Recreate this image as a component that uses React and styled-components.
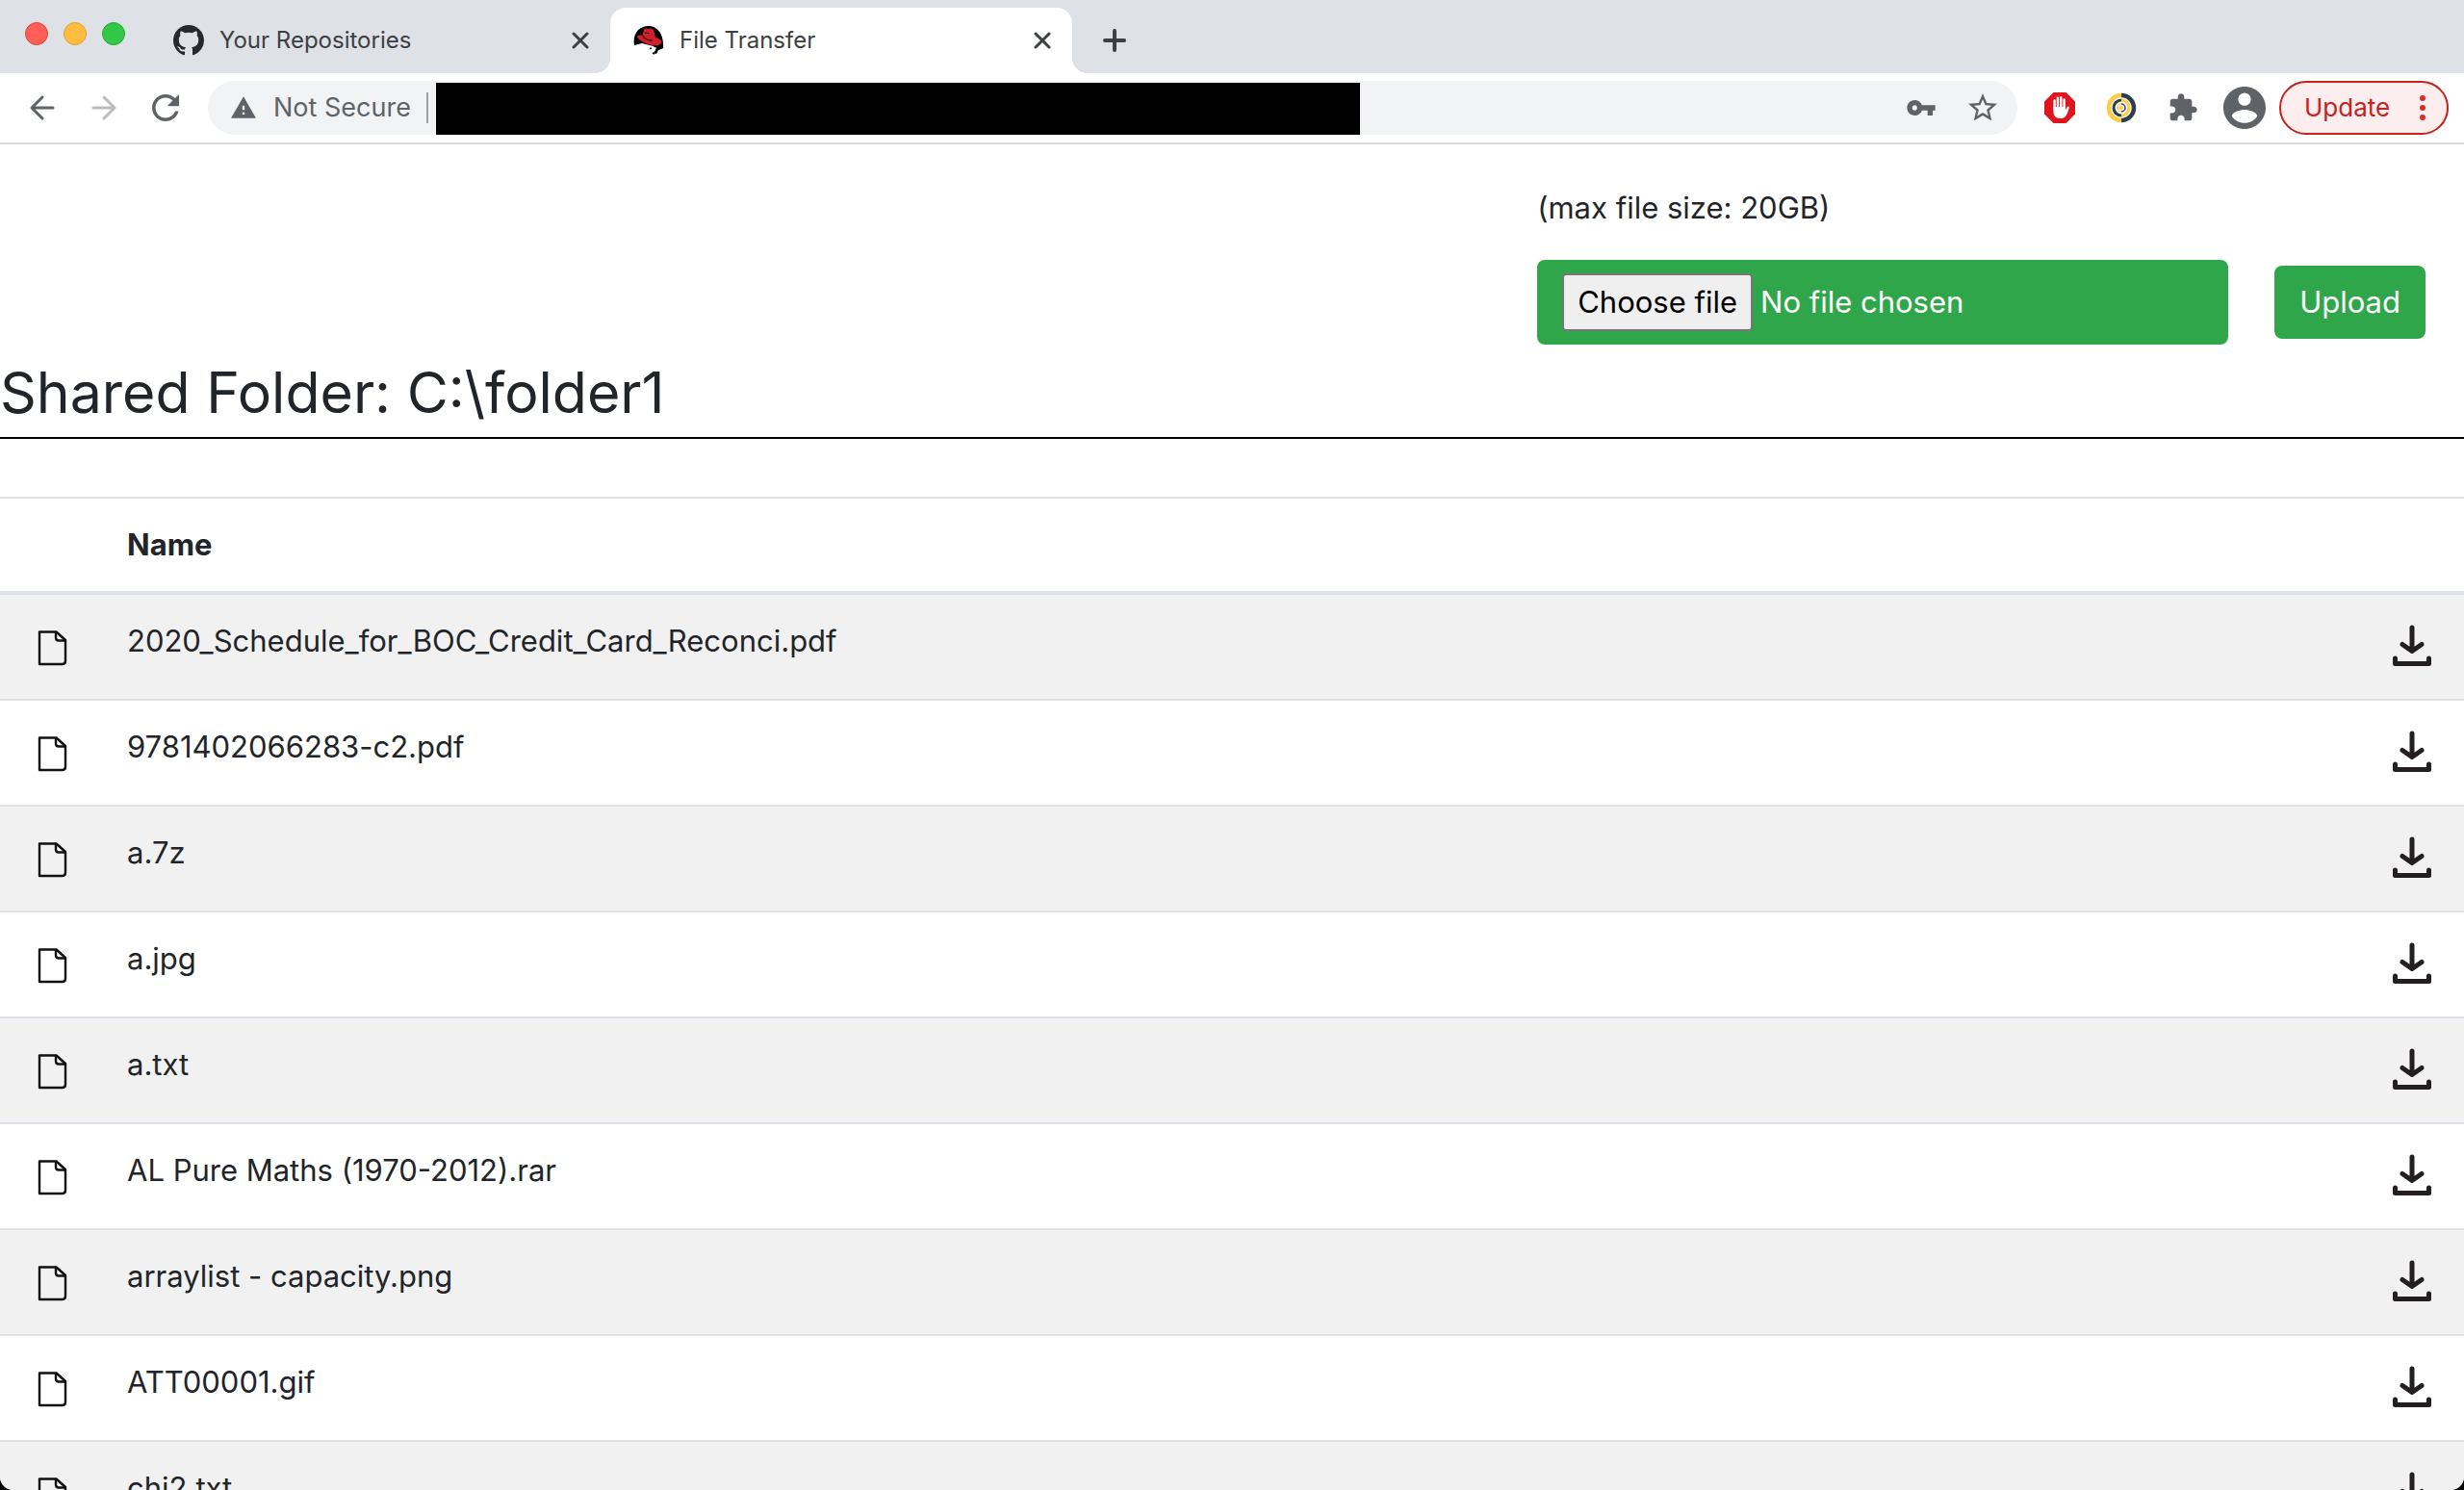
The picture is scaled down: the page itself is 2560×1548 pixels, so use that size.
import React, { useRef, useState } from "react";
import styled, { createGlobalStyle } from "styled-components";

const GlobalStyle = createGlobalStyle`
  *, *::before, *::after { box-sizing: border-box; }
  html, body { margin: 0; background: #000; }
  body, button, input {
    font-family: Inter, "Liberation Sans", sans-serif;
  }
`;

const Window = styled.div`
  display: flex;
  flex-direction: column;
  height: 100vh;
  overflow: hidden;
  background: #fff;
  border-radius: 0 0 14px 14px;
`;

const TabStrip = styled.header`
  display: flex;
  flex: none;
  height: 76px;
  padding-left: 26px;
  background: #dee1e6;
`;

const TrafficLights = styled.div`
  display: flex;
  gap: 16px;
  padding-top: 23px;
  margin-right: 24px;
`;

const Light = styled.button`
  width: 24px;
  height: 24px;
  padding: 0;
  border: 1px solid ${(p) => p.$edge};
  border-radius: 50%;
  background: ${(p) => p.$fill};
`;

const Tab = styled.div`
  position: relative;
  display: flex;
  align-items: center;
  width: 480px;
  margin-top: 8px;
  padding: 0 22px 0 ${(p) => (p.$active ? "24px" : "26px")};
  border-radius: 16px 16px 0 0;
  background: ${(p) => (p.$active ? "#fff" : "transparent")};

  &::before, &::after {
    content: "";
    display: ${(p) => (p.$active ? "block" : "none")};
    position: absolute;
    bottom: 0;
    width: 16px;
    height: 16px;
  }
  &::before {
    right: 100%;
    background: radial-gradient(circle at 0 0, transparent 16px, #fff 16px);
  }
  &::after {
    left: 100%;
    background: radial-gradient(circle at 100% 0, transparent 16px, #fff 16px);
  }
`;

const TabTitle = styled.span`
  flex: 1;
  margin: 0 16px;
  font-size: 24px;
  line-height: 32px;
  color: #3c4043;
  white-space: nowrap;
`;

const IconButton = styled.button`
  display: grid;
  place-items: center;
  flex: none;
  width: ${(p) => p.$size}px;
  height: ${(p) => p.$size}px;
  padding: 0;
  border: 0;
  background: none;
  color: ${(p) => p.$color || "#5f6368"};
`;

const NewTab = styled(IconButton)`
  align-self: center;
  margin: 8px 0 0 24px;
`;

const Toolbar = styled.nav`
  display: flex;
  flex: none;
  align-items: center;
  height: 74px;
  padding: 0 16px 0 12px;
  border-bottom: 2px solid #dadce0;
`;

const Omnibox = styled.div`
  display: flex;
  flex: 1;
  align-items: center;
  height: 56px;
  margin: 0 12px;
  padding: 0 4px 0 24px;
  border-radius: 28px;
  background: #f1f3f4;
`;

const Security = styled.span`
  display: flex;
  align-items: center;
  gap: 18px;
  height: 32px;
  padding-right: 16px;
  margin-right: 8px;
  border-right: 2px solid #9aa0a6;
  font-size: 27px;
  line-height: 32px;
  color: #5f6368;
  white-space: nowrap;
`;

const Address = styled.input`
  flex: 0 1 960px;
  min-width: 0;
  height: 54px;
  align-self: flex-end;
  margin-right: auto;
  padding: 0 12px;
  border: 0;
  background: #000;
  color: #000;
  font-size: 27px;
`;

const UpdateButton = styled.button`
  display: flex;
  flex: none;
  align-items: center;
  justify-content: space-between;
  width: 176px;
  height: 56px;
  margin-left: 4px;
  padding: 0 22px 0 24px;
  border: 2px solid #c5221f;
  border-radius: 28px;
  background: #fceeee;
  color: #c5221f;
  font-size: 26px;
  line-height: 32px;
`;

const Page = styled.main`
  flex: 1;
  min-height: 0;
  overflow: hidden;
  color: #212529;
  font-size: 31px;
  line-height: 48px;
`;

const UploadForm = styled.form`
  display: grid;
  grid-template-columns: 718px auto;
  column-gap: 48px;
  row-gap: 30px;
  align-items: center;
  justify-content: end;
  padding: 42px 40px 0 0;
`;

const Hint = styled.p`
  grid-column: 1 / -1;
  margin: 0;
`;

const FilePicker = styled.div`
  display: flex;
  align-items: center;
  gap: 8px;
  height: 88px;
  padding: 0 26px;
  border-radius: 8px;
  background: #30a64a;
  color: #fff;
`;

const ChooseButton = styled.button`
  height: 60px;
  padding: 0 14px;
  border: 2px solid #767676;
  border-radius: 4px;
  background: #efefef;
  color: #000;
  font-size: 31px;
  line-height: 48px;
  white-space: nowrap;
`;

const UploadButton = styled.button`
  height: 76px;
  padding: 0 26px;
  border: 0;
  border-radius: 8px;
  background: #30a64a;
  color: #fff;
  font-size: 31px;
  line-height: 48px;
`;

const Title = styled.h1`
  margin: 0 0 60px;
  padding: 12px 0 8px;
  border-bottom: 2px solid #000;
  font-size: 59px;
  font-weight: 400;
  line-height: 76px;
`;

const FileTable = styled.table`
  width: 100%;
  border-top: 2px solid #dee2e6;
  border-spacing: 0;
`;

const HeadCell = styled.th`
  width: ${(p) => p.$width || "auto"};
  height: 100px;
  padding: 0 24px;
  border-bottom: 4px solid #dee2e6;
  font-weight: 700;
  text-align: left;
`;

const Row = styled.tr`
  &:nth-child(odd) { background: #f1f1f1; }
`;

const Cell = styled.td`
  height: 110px;
  padding: ${(p) => (p.$icon ? "30px 0 0" : "24px 24px 0")};
  border-bottom: 2px solid #dee2e6;
  vertical-align: top;
  line-height: ${(p) => (p.$icon ? "0" : "48px")};
`;

const FileIconBox = styled.span`
  display: block;
  padding: 7px 0 0 39px;
`;

const DownloadLink = styled.a`
  display: block;
  width: 42px;
  margin-left: auto;
  margin-right: 33px;
`;

const Stroke = ({ size, box = "0 0 24 24", w = 2, children }) => (
  <svg width={size} height={size} viewBox={box} fill="none" stroke="currentColor" strokeWidth={w} strokeLinecap="round" strokeLinejoin="round" aria-hidden="true">
    {children}
  </svg>
);

const Solid = ({ size, box = "0 0 24 24", d }) => (
  <svg width={size} height={size} viewBox={box} fill="currentColor" aria-hidden="true">
    <path d={d} />
  </svg>
);

const CloseIcon = () => (
  <Stroke size={18} box="0 0 18 18" w={3}><path d="M2 2l14 14M16 2L2 16" /></Stroke>
);

const GithubIcon = () => (
  <svg width="32" height="32" viewBox="0 0 16 16" fill="#24292e" aria-hidden="true">
    <path d="M8 0C3.58 0 0 3.58 0 8c0 3.54 2.29 6.53 5.47 7.59.4.07.55-.17.55-.38 0-.19-.01-.82-.01-1.49-2.01.37-2.53-.49-2.69-.94-.09-.23-.48-.94-.82-1.13-.28-.15-.68-.52-.01-.53.63-.01 1.08.58 1.23.82.72 1.21 1.87.87 2.33.66.07-.52.28-.87.51-1.07-1.78-.2-3.64-.89-3.64-3.95 0-.87.31-1.59.82-2.15-.08-.2-.36-1.02.08-2.12 0 0 .67-.21 2.2.82.64-.18 1.32-.27 2-.27s1.36.09 2 .27c1.53-1.04 2.2-.82 2.2-.82.44 1.1.16 1.92.08 2.12.51.56.82 1.27.82 2.15 0 3.07-1.87 3.75-3.65 3.95.29.25.54.73.54 1.48 0 1.07-.01 1.93-.01 2.2 0 .21.15.46.55.38A8.013 8.013 0 0016 8c0-4.42-3.58-8-8-8z" />
  </svg>
);

const RedHatIcon = () => (
  <svg width="32" height="32" viewBox="0 0 32 32" aria-hidden="true">
    <path d="M1 21C-1 9 6 1 15.500 1S32 9 31 24l-2 1-3 1-2 4-3-1 2-3-2-4-12-3-4 1z" fill="#000" />
    <path d="M7 20l4 .5 9 2 4 1-1.500 3-2.500-1-2 1.500-4-1-3-2-4-1z" fill="#fff" />
    <path d="M17 24.500l2-.5M20 29l2 1" stroke="#000" strokeWidth="1.500" />
    <path d="M11 5c.5-2 2.500-1.500 4-.8C17 3 20 3.300 21 5.500c1 2 1.300 5 2 7.500 4 1 7 3 6 6-2 3-9 3-15 .5S3 13.500 4.500 11.500c1-1.300 3-1 5-.5z" fill="#d1202a" />
    <path d="M9.800 11.500c2.500 3.500 6.500 4.500 10 4.500M12.500 8l4 .5" fill="none" stroke="#000" strokeWidth="1.200" />
  </svg>
);

const AdBlockIcon = () => (
  <svg width="32" height="32" viewBox="0 0 32 32" aria-hidden="true">
    <path d="M9.500 0h13L32 9.500v13L22.500 32h-13L0 22.500v-13z" fill="#e1141d" />
    <g stroke="#fff" strokeWidth="2.400" strokeLinecap="round" fill="none">
      <path d="M10.600 8.500V18M13.900 5.800V17M17.300 5.200V17M20.600 7.500V18" />
    </g>
    <path d="M9.400 15h12.400v3.500l1.800-3.300c.6-1.200 2.400-.9 2.100.6-.9 4.200-2 7-3.700 9.200-1.300 1.500-3 2-5.300 2-5.400 0-7.300-3-7.300-8z" fill="#fff" />
  </svg>
);

const TargetIcon = () => (
  <svg width="32" height="32" viewBox="0 0 32 32" fill="none" aria-hidden="true">
    <g stroke="#ffcb45">
      <path d="M16 3a13 13 0 000 26" strokeWidth="4.500" />
      <path d="M16 8a8 8 0 010 16" strokeWidth="3" />
      <path d="M16 12a4 4 0 000 8" strokeWidth="1.500" />
    </g>
    <g stroke="#2f3e4e">
      <path d="M16 3a13 13 0 010 26" strokeWidth="4.500" />
      <path d="M16 8a8 8 0 000 16" strokeWidth="3" />
      <path d="M16 12a4 4 0 010 8" strokeWidth="1.500" />
    </g>
    <circle cx="16" cy="16" r="2" fill="#ffcb45" />
  </svg>
);

const DocumentIcon = () => (
  <svg width="32" height="38" viewBox="0 0 32 38" fill="none" stroke="#111" strokeWidth="2.400" strokeLinejoin="round" aria-hidden="true">
    <path d="M2 35V1.500H19.500L29 10V31.500Q29 35 25.500 35H2Z" />
    <path d="M19 1.500V7.500Q19 10.500 22 10.500H29" />
  </svg>
);

const DownloadIcon = () => (
  <svg width="42" height="44" viewBox="0 0 42 44" fill="none" stroke="#231f20" strokeWidth="5" strokeLinecap="round" strokeLinejoin="round" aria-hidden="true">
    <path d="M21 4V28M11 21.500L21 28.500L31 21.500" />
    <path d="M3.500 36V41.500H38.500V36" />
  </svg>
);

const files = [
  "2020_Schedule_for_BOC_Credit_Card_Reconci.pdf",
  "9781402066283-c2.pdf",
  "a.7z",
  "a.jpg",
  "a.txt",
  "AL Pure Maths (1970-2012).rar",
  "arraylist - capacity.png",
  "ATT00001.gif",
  "chi2.txt",
];

const PATHS = {
  reload: "M17.65 6.350C16.200 4.900 14.210 4 12 4c-4.420 0-7.990 3.580-7.990 8s3.570 8 7.990 8c3.730 0 6.840-2.550 7.730-6h-2.080c-.820 2.330-3.040 4-5.650 4-3.310 0-6-2.690-6-6s2.690-6 6-6c1.660 0 3.140.690 4.220 1.780L13 11h7V4l-2.350 2.350z",
  warning: "M1 21h22L12 2 1 21zm12-3h-2v-2h2v2zm0-4h-2v-4h2v4z",
  key: "M12.650 10C11.830 7.670 9.610 6 7 6c-3.310 0-6 2.690-6 6s2.690 6 6 6c2.610 0 4.830-1.670 5.650-4H17v4h4v-4h2v-4H12.650zM7 14c-1.100 0-2-.9-2-2s.9-2 2-2 2 .9 2 2-.9 2-2 2z",
  star: "M22 9.240l-7.190-.620L12 2 9.190 8.630 2 9.240l5.460 4.730L5.820 21 12 17.270 18.180 21l-1.630-7.030L22 9.240zM12 15.400l-3.760 2.270 1-4.280-3.320-2.880 4.380-.380L12 6.100l1.710 4.040 4.380.380-3.320 2.880 1 4.280L12 15.400z",
  puzzle: "M20.500 11H19V7c0-1.100-.9-2-2-2h-4V3.500C13 2.120 11.880 1 10.500 1S8 2.120 8 3.500V5H4c-1.100 0-1.990.9-1.990 2v3.800H3.500c1.490 0 2.700 1.210 2.700 2.700s-1.210 2.700-2.700 2.700H2V20c0 1.100.9 2 2 2h3.800v-1.500c0-1.490 1.210-2.700 2.700-2.700 1.490 0 2.700 1.210 2.700 2.700V22H17c1.100 0 2-.9 2-2v-4h1.500c1.380 0 2.500-1.120 2.500-2.500S21.880 11 20.500 11z",
  avatar: "M12 2C6.480 2 2 6.480 2 12s4.480 10 10 10 10-4.480 10-10S17.520 2 12 2zm0 3c1.660 0 3 1.340 3 3s-1.340 3-3 3-3-1.340-3-3 1.340-3 3-3zm0 14.200c-2.500 0-4.710-1.280-6-3.220.030-1.990 4-3.080 6-3.080 1.990 0 5.970 1.090 6 3.080-1.290 1.940-3.500 3.220-6 3.220z",
};

export default function App() {
  const picker = useRef(null);
  const [chosen, setChosen] = useState("");

  return (
    <>
      <GlobalStyle />
      <Window>
        <TabStrip>
          <TrafficLights>
            <Light $fill="#ff5f57" $edge="#e0443e" aria-label="Close window" />
            <Light $fill="#febc40" $edge="#dea034" aria-label="Minimize window" />
            <Light $fill="#33c748" $edge="#27aa35" aria-label="Zoom window" />
          </TrafficLights>
          <Tab>
            <GithubIcon />
            <TabTitle>Your Repositories</TabTitle>
            <IconButton $size={18} $color="#3c4043" aria-label="Close tab"><CloseIcon /></IconButton>
          </Tab>
          <Tab $active>
            <RedHatIcon />
            <TabTitle>File Transfer</TabTitle>
            <IconButton $size={18} $color="#3c4043" aria-label="Close tab"><CloseIcon /></IconButton>
          </Tab>
          <NewTab $size={40} $color="#3c4043" aria-label="New tab">
            <Stroke size={24} w={4}><path d="M12 2v20M2 12h20" /></Stroke>
          </NewTab>
        </TabStrip>

        <Toolbar>
          <IconButton $size={64} aria-label="Back">
            <Stroke size={28} box="0 0 28 28" w={3}><path d="M25 14H4M14 3L3 14l11 11" /></Stroke>
          </IconButton>
          <IconButton $size={64} $color="#babcbe" aria-label="Forward">
            <Stroke size={28} box="0 0 28 28" w={3}><path d="M3 14h21M14 3l11 11-11 11" /></Stroke>
          </IconButton>
          <IconButton $size={64} aria-label="Reload">
            <Solid size={28} box="4 4 16 16" d={PATHS.reload} />
          </IconButton>
          <Omnibox>
            <Security>
              <Solid size={26} box="1 1 22 22" d={PATHS.warning} />
              Not Secure
            </Security>
            <Address type="text" aria-label="Address" />
            <IconButton $size={64} aria-label="Passwords"><Solid size={32} d={PATHS.key} /></IconButton>
            <IconButton $size={64} aria-label="Bookmark this page"><Solid size={36} d={PATHS.star} /></IconButton>
          </Omnibox>
          <IconButton $size={64} aria-label="AdBlock"><AdBlockIcon /></IconButton>
          <IconButton $size={64} aria-label="Target extension"><TargetIcon /></IconButton>
          <IconButton $size={64} aria-label="Extensions"><Solid size={32} d={PATHS.puzzle} /></IconButton>
          <IconButton $size={64} aria-label="Profile"><Solid size={44} box="2 2 20 20" d={PATHS.avatar} /></IconButton>
          <UpdateButton>
            Update
            <svg width="6" height="26" viewBox="0 0 6 26" fill="#d93025" aria-hidden="true">
              <circle cx="3" cy="3" r="3" /><circle cx="3" cy="13" r="3" /><circle cx="3" cy="23" r="3" />
            </svg>
          </UpdateButton>
        </Toolbar>

        <Page>
          <UploadForm onSubmit={(e) => e.preventDefault()}>
            <Hint>(max file size: 20GB)</Hint>
            <FilePicker>
              <input ref={picker} type="file" hidden aria-label="File" onChange={(e) => setChosen(e.target.files[0]?.name || "")} />
              <ChooseButton type="button" onClick={() => picker.current.click()}>Choose file</ChooseButton>
              <span>{chosen || "No file chosen"}</span>
            </FilePicker>
            <UploadButton type="submit">Upload</UploadButton>
          </UploadForm>
          <Title>Shared Folder: C:\folder1</Title>
          <FileTable>
            <thead>
              <tr>
                <HeadCell $width="108px" aria-label="Type" />
                <HeadCell>Name</HeadCell>
                <HeadCell $width="120px" aria-label="Download" />
              </tr>
            </thead>
            <tbody>
              {files.map((name) => (
                <Row key={name}>
                  <Cell $icon><FileIconBox><DocumentIcon /></FileIconBox></Cell>
                  <Cell>{name}</Cell>
                  <Cell $icon>
                    <DownloadLink href="#" aria-label={"Download " + name}><DownloadIcon /></DownloadLink>
                  </Cell>
                </Row>
              ))}
            </tbody>
          </FileTable>
        </Page>
      </Window>
    </>
  );
}
